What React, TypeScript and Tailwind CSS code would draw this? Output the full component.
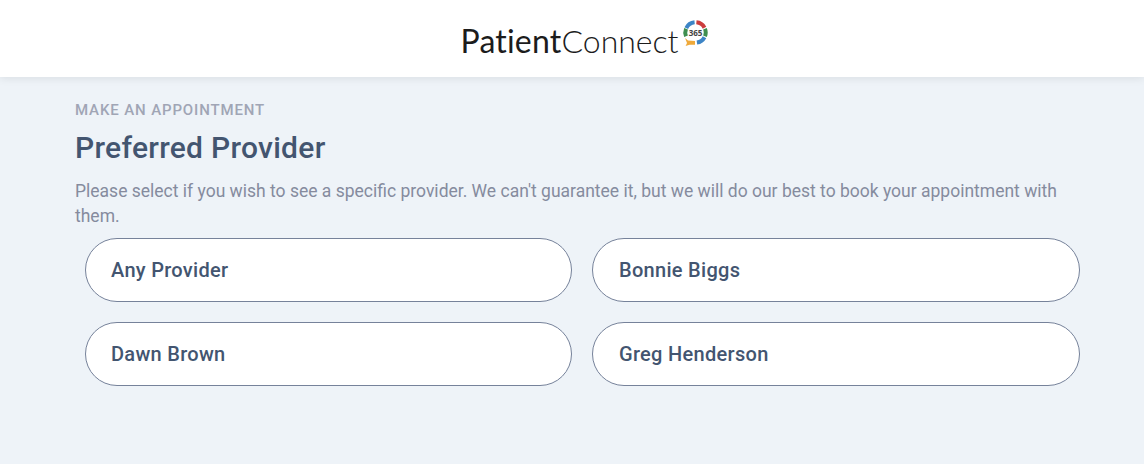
const providers = ['Any Provider', 'Bonnie Biggs', 'Dawn Brown', 'Greg Henderson'];

const LogoMark = () => (
  <svg width="26" height="28" viewBox="0 0 26 28" className="absolute left-[221px] top-[-5px]">
    <g fill="none" strokeWidth="4">
      <path d="M4.26 10.19 A10.2 10.2 0 0 1 12.6 4.34" stroke="#3d85c6" />
      <path d="M14.4 4.34 A10.2 10.2 0 0 1 22.5 9.71" stroke="#cc3d3d" />
      <path d="M22.96 10.68 A10.2 10.2 0 0 1 22.96 18.32" stroke="#3f8f4f" />
      <path d="M22.5 19.29 A10.2 10.2 0 0 1 14.92 24.6" stroke="#3d85c6" />
      <path d="M4.04 18.32 A10.2 10.2 0 0 1 4.04 10.68" stroke="#3f8f4f" />
    </g>
    <path d="M3 20 L6 22.4 L13 23 L13 26.8 L7.6 26.8 L3.6 28 L5 25 Z" fill="#efa93a" />
    <text x="13.5" y="17.6" textAnchor="middle" fontSize="8" fontWeight="700" fill="#444" fontFamily="'Open Sans', sans-serif">365</text>
  </svg>
);

export default function App() {
  return (
    <div className="min-h-[464px] bg-[#eef3f8] font-['Roboto',sans-serif]">
      <header className="flex h-[77px] justify-center bg-white pt-[23px] pl-[25px] shadow-[0_2px_8px_rgba(0,0,0,0.08)]">
        <div className="relative h-[36px] w-[248px] font-['Lato',sans-serif] text-[32px] leading-[36px] text-[#1c1c1c]">
          <span className="font-normal tracking-[0.2px]">Patient</span>
          <span className="font-light">Connect</span>
          <LogoMark />
        </div>
      </header>
      <main className="px-[75px] pt-[24px]">
        <p className="text-[15px] leading-[18px] font-medium tracking-[0.87px] text-[#a0a5b5] uppercase">Make an appointment</p>
        <h1 className="mt-[11px] text-[30px] leading-[36px] font-medium tracking-[0.28px] text-[#435570]">Preferred Provider</h1>
        <p className="mt-[13px] text-[17.5px] leading-[25px] text-[#858b9e]">
          Please select if you wish to see a specific provider. We can't guarantee it, but we will do our best to book your appointment with them.
        </p>
        <div className="mt-[9px] grid grid-cols-[487px_488px] gap-[20px] px-[10px]">
          {providers.map((name) => (
            <button
              key={name}
              className="h-[64px] rounded-[32px] border border-[#76829a] bg-white pl-[25px] text-left text-[20px] font-medium tracking-[0.3px] text-[#435570] even:pl-[26px]"
            >
              {name}
            </button>
          ))}
        </div>
      </main>
    </div>
  );
}
